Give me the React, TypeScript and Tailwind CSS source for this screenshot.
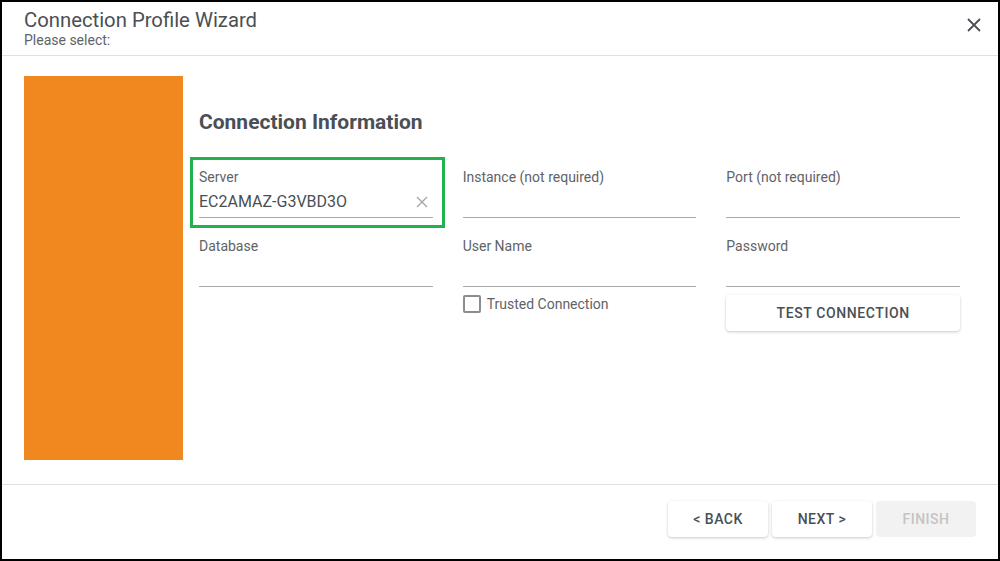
import React from "react";

const font = { fontFamily: "Roboto, 'Liberation Sans', sans-serif" };

type FieldProps = {
  label: string;
  value?: string;
  clearable?: boolean;
  highlighted?: boolean;
};

const Field = ({ label, value, clearable, highlighted }: FieldProps) => (
  <div className="relative flex flex-col pt-[7px]">
    {highlighted && (
      <div className="absolute -top-[3px] -bottom-[10px] -left-[9px] -right-[12px] border-[3px] border-[#20b24c] pointer-events-none" />
    )}
    <label className="h-5 text-sm leading-5 text-[#5f6368]">{label}</label>
    <div className="h-[31px] border-b border-[#a9a9a9] flex items-center justify-between">
      <span className="text-base leading-6 text-[#4a4f55]">{value}</span>
      {clearable && (
        <svg width="12" height="12" viewBox="0 0 12 12" className="mr-[5px]">
          <path d="M1 1 L11 11 M11 1 L1 11" stroke="#a3a7ab" strokeWidth="1.4" />
        </svg>
      )}
    </div>
  </div>
);

const FlatButton = ({ children, disabled }: { children: React.ReactNode; disabled?: boolean }) => (
  <button
    className={`h-9 w-[100px] rounded text-sm font-medium tracking-[0.5px] uppercase ${
      disabled
        ? "bg-[#f2f2f2] text-[#c4c4c4]"
        : "bg-white text-[#4a4f55] shadow-[0_1px_3px_rgba(0,0,0,0.22)]"
    }`}
  >
    {children}
  </button>
);

export default function App() {
  return (
    <div style={font} className="w-[1000px] h-[561px] border-2 border-black bg-white flex flex-col">
      {/* Header */}
      <div className="h-[54px] border-b border-[#e0e0e0] pl-[22px] pr-[17px] pt-[6px] flex justify-between">
        <div>
          <div className="text-[20.3px] leading-6 text-[#4a4f55]">Connection Profile Wizard</div>
          <div className="text-sm leading-4 text-[#5f6368]">Please select:</div>
        </div>
        <button className="mt-[10px] h-[14px] w-[14px]">
          <svg width="14" height="14" viewBox="0 0 14 14">
            <path d="M1 1 L13 13 M13 1 L1 13" stroke="#4a4f55" strokeWidth="1.8" />
          </svg>
        </button>
      </div>

      {/* Body */}
      <div className="h-[428px] flex pl-[22px] pr-[38px] pt-[20px] gap-4">
        <div className="w-[159px] h-[384px] bg-[#f0871f] shrink-0" />
        <div className="flex-1 pt-[32px]">
          <h2 className="text-[21px] leading-7 font-bold text-[#4a4f55]">Connection Information</h2>
          <div className="mt-[24px] grid grid-cols-3 gap-x-[30px] gap-y-[11px]">
            <Field label="Server" value="EC2AMAZ-G3VBD3O" clearable highlighted />
            <Field label="Instance (not required)" />
            <Field label="Port (not required)" />
            <Field label="Database" />
            <Field label="User Name" />
            <Field label="Password" />
          </div>
          <div className="mt-[8px] grid grid-cols-3 gap-x-[30px]">
            <div />
            <label className="flex items-center gap-[6px] h-[18px]">
              <span className="w-[18px] h-[18px] border-2 border-[#8a8d91] rounded-[2px]" />
              <span className="text-sm text-[#5f6368]">Trusted Connection</span>
            </label>
            <button className="h-9 rounded bg-white text-sm font-medium tracking-[0.6px] uppercase text-[#4a4f55] shadow-[0_1px_3px_rgba(0,0,0,0.22)]">
              Test Connection
            </button>
          </div>
        </div>
      </div>

      {/* Footer */}
      <div className="flex-1 border-t border-[#e0e0e0] flex justify-end gap-1 pt-4 pr-[22px]">
        <FlatButton>&lt; Back</FlatButton>
        <FlatButton>Next &gt;</FlatButton>
        <FlatButton disabled>Finish</FlatButton>
      </div>
    </div>
  );
}
